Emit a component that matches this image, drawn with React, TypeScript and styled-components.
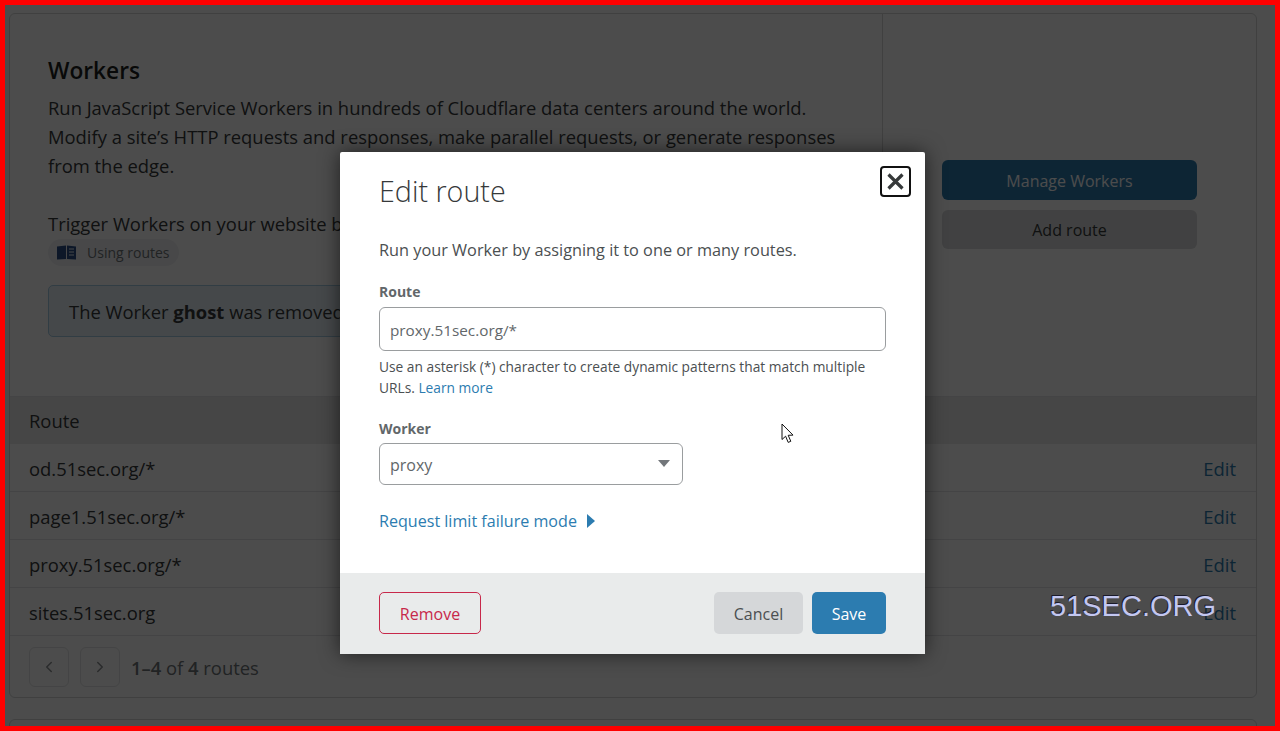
import styled, { createGlobalStyle } from 'styled-components';
import { ChevronLeft, ChevronRight } from 'lucide-react';

const GlobalStyle = createGlobalStyle`
  html, body {
    margin: 0;
    padding: 0;
    background: #ffffff;
  }
  * {
    box-sizing: border-box;
  }
  body {
    font-family: "Open Sans", "Noto Sans", "Liberation Sans", sans-serif;
    color: #36393a;
  }
`;

const Frame = styled.div`
  position: relative;
  width: 1280px;
  height: 731px;
  border: 5px solid #ff0000;
  overflow: hidden;
`;

const Page = styled.div`
  padding: 8px 18px 0 4px;
`;

const Card = styled.section`
  border: 1px solid #d5d7d8;
  border-radius: 6px;
  background: #ffffff;
  & + & {
    margin-top: 21px;
    height: 60px;
  }
`;

const Top = styled.div`
  display: flex;
  height: 382px;
`;

const Intro = styled.div`
  width: 873px;
  padding: 41px 38px 0;
  border-right: 1px solid #d5d7d8;
`;

const Title = styled.h2`
  margin: 0 0 6px;
  font-size: 22.7px;
  line-height: 32px;
  font-weight: 600;
  color: #1d1f20;
`;

const Body = styled.p`
  margin: 0;
  font-size: 18.4px;
  line-height: 29px;
  white-space: nowrap;
`;

const Gap = styled.div`
  height: 29px;
`;

const Pill = styled.span`
  display: inline-flex;
  align-items: center;
  gap: 10px;
  height: 27px;
  margin-top: 1px;
  padding: 0 9px;
  border-radius: 14px;
  background: #f0f2f5;
  font-size: 14px;
  color: #6f7578;
`;

const Notice = styled.div`
  margin-top: 19px;
  height: 52px;
  width: 800px;
  padding: 0 20px;
  display: flex;
  align-items: center;
  border: 1px solid #a5cbe4;
  border-radius: 5px;
  background: #e6f1f8;
  font-size: 18.4px;
  white-space: pre;
  b {
    font-weight: 700;
  }
`;

const Actions = styled.div`
  flex: 1;
  padding: 146px 59px 0;
  display: flex;
  flex-direction: column;
  gap: 10px;
`;

const ActionButton = styled.div<{ $primary?: boolean }>`
  height: ${(p) => (p.$primary ? 40 : 39)}px;
  padding-top: ${(p) => (p.$primary ? 2 : 0)}px;
  display: flex;
  align-items: center;
  justify-content: center;
  border-radius: 6px;
  font-size: 16px;
  background: ${(p) => (p.$primary ? '#2c7cb0' : '#d9dbdc')};
  color: ${(p) => (p.$primary ? '#ffffff' : '#36393a')};
`;

const TableHead = styled.div`
  height: 48px;
  padding: 0 19px;
  display: flex;
  align-items: center;
  background: #ebecec;
  border-top: 1px solid #e3e5e6;
  font-size: 18.4px;
  font-weight: 500;
`;

const Row = styled.div`
  height: 48px;
  padding: 2px 20px 0 19px;
  display: flex;
  align-items: center;
  justify-content: space-between;
  border-bottom: 1px solid #e3e5e6;
  font-size: 18.4px;
`;

const EditLink = styled.span`
  color: #2c7cb0;
`;

const Pager = styled.div`
  height: 61px;
  padding: 0 19px;
  display: flex;
  align-items: center;
  gap: 11px;
  font-size: 18.4px;
  color: #6f7578;
  b {
    font-weight: 600;
  }
`;

const PagerText = styled.span`
  padding-top: 2px;
`;

const PageButton = styled.div`
  width: 40px;
  height: 40px;
  display: flex;
  align-items: center;
  justify-content: center;
  border: 1px solid #e3e5e6;
  border-radius: 6px;
  color: #8d9194;
`;

const Overlay = styled.div`
  position: absolute;
  inset: 0;
  background: rgba(0, 0, 0, 0.7);
  padding: 147px 0 0 335px;
`;

const Modal = styled.div`
  position: relative;
  width: 585px;
  height: 502px;
  display: flex;
  flex-direction: column;
  justify-content: space-between;
  background: #ffffff;
  border-radius: 2px;
  box-shadow: 0 0 20px rgba(0, 0, 0, 0.6);
`;

const ModalBody = styled.div`
  padding: 20px 39px 0;
`;

const ModalTitle = styled.h2`
  margin: 0 0 28px;
  font-size: 28.7px;
  line-height: 38px;
  font-weight: 300;
  color: #36393a;
`;

const CloseButton = styled.div`
  position: absolute;
  top: 14px;
  right: 14px;
  width: 31px;
  height: 31px;
  display: flex;
  align-items: center;
  justify-content: center;
  border: 2px solid #111111;
  border-radius: 4px;
  color: #36393a;
`;

const Lead = styled.p`
  margin: 0 0 20px;
  font-size: 16.3px;
  line-height: 24px;
  color: #4b4f51;
`;

const Label = styled.div<{ $gap: number }>`
  font-size: 14px;
  line-height: 20px;
  font-weight: 700;
  color: #62676a;
  margin-bottom: ${(p) => p.$gap}px;
`;

const Field = styled.div<{ $width: number; $height: number; $size: number }>`
  width: ${(p) => p.$width}px;
  height: ${(p) => p.$height}px;
  display: flex;
  align-items: center;
  justify-content: space-between;
  padding: 2px 12px 0 10px;
  border: 1px solid #9a9d9f;
  border-radius: 6px;
  font-size: ${(p) => p.$size}px;
  color: #62676a;
`;

const Help = styled.p`
  margin: 5px 0 21px;
  font-size: 13.75px;
  line-height: 21px;
  color: #4b4f51;
  a {
    color: #2c7cb0;
  }
`;

const Caret = styled.span`
  width: 0;
  height: 0;
  margin-top: -3px;
  border-left: 6px solid transparent;
  border-right: 6px solid transparent;
  border-top: 7px solid #72767a;
`;

const Disclosure = styled.div`
  margin-top: 24px;
  display: flex;
  align-items: center;
  gap: 10px;
  font-size: 16.1px;
  line-height: 24px;
  color: #2c7cb0;
`;

const DisclosureArrow = styled.span`
  width: 0;
  height: 0;
  border-top: 7px solid transparent;
  border-bottom: 7px solid transparent;
  border-left: 8px solid #2c7cb0;
`;

const ModalFooter = styled.div`
  height: 81px;
  padding: 0 39px 2px;
  display: flex;
  align-items: center;
  justify-content: space-between;
  background: #e9ebeb;
`;

const FooterGroup = styled.div`
  display: flex;
  gap: 9px;
`;

const FooterButton = styled.div<{ $kind: 'danger' | 'muted' | 'primary'; $width: number }>`
  width: ${(p) => p.$width}px;
  height: 42px;
  padding-top: 2px;
  display: flex;
  align-items: center;
  justify-content: center;
  border-radius: 5px;
  font-size: 16px;
  border: 1px solid ${(p) => (p.$kind === 'danger' ? '#c7284a' : 'transparent')};
  background: ${(p) => (p.$kind === 'primary' ? '#2c7cb0' : p.$kind === 'muted' ? '#d5d7d9' : 'transparent')};
  color: ${(p) => (p.$kind === 'primary' ? '#ffffff' : p.$kind === 'muted' ? '#4b4f51' : '#c7284a')};
`;

const Pointer = styled.svg`
  position: absolute;
  left: 776px;
  top: 418px;
`;

const Watermark = styled.div`
  position: absolute;
  left: 1045px;
  top: 584px;
  font-family: "Liberation Sans", Arial, sans-serif;
  font-size: 29px;
  line-height: 34px;
  color: #c3c7f0;
  text-shadow: -1px -1px 0 #1a1a2a;
`;

const routes = ['od.51sec.org/*', 'page1.51sec.org/*', 'proxy.51sec.org/*', 'sites.51sec.org'];

export default function App() {
  return (
    <>
      <GlobalStyle />
      <Frame>
        <Page>
          <Card>
            <Top>
              <Intro>
                <Title>Workers</Title>
                <Body>
                  Run JavaScript Service Workers in hundreds of Cloudflare data centers around the world.
                  <br />
                  Modify a site’s HTTP requests and responses, make parallel requests, or generate responses
                  <br />
                  from the edge.
                </Body>
                <Gap />
                <Body>Trigger Workers on your website by adding a route.</Body>
                <Pill>
                  <svg width="20" height="15" viewBox="0 0 20 15">
                    <path d="M0 1.5 L9 0.5 V14 L0 14.5 Z" fill="#2c4f86" />
                    <path d="M10 0.5 L19 1.5 V14.5 L10 14 Z" fill="#2c4f86" />
                    <path d="M12 4 H17 M12 7 H17 M12 10 H17" stroke="#f0f2f5" strokeWidth="1" />
                  </svg>
                  Using routes
                </Pill>
                <Notice>
                  The Worker <b>ghost</b> was removed from this route.
                </Notice>
              </Intro>
              <Actions>
                <ActionButton $primary>Manage Workers</ActionButton>
                <ActionButton>Add route</ActionButton>
              </Actions>
            </Top>
            <TableHead>Route</TableHead>
            {routes.map((route) => (
              <Row key={route}>
                <span>{route}</span>
                <EditLink>Edit</EditLink>
              </Row>
            ))}
            <Pager>
              <PageButton>
                <ChevronLeft size={18} />
              </PageButton>
              <PageButton>
                <ChevronRight size={18} />
              </PageButton>
              <PagerText>
                <b>1–4</b> of <b>4</b> routes
              </PagerText>
            </Pager>
          </Card>
          <Card />
        </Page>
        <Overlay>
          <Modal>
            <ModalBody>
              <ModalTitle>Edit route</ModalTitle>
              <Lead>Run your Worker by assigning it to one or many routes.</Lead>
              <Label $gap={5}>Route</Label>
              <Field $width={507} $height={44} $size={15.3}>
                proxy.51sec.org/*
              </Field>
              <Help>
                Use an asterisk (*) character to create dynamic patterns that match multiple
                <br />
                URLs. <a>Learn more</a>
              </Help>
              <Label $gap={4}>Worker</Label>
              <Field $width={304} $height={42} $size={16}>
                proxy
                <Caret />
              </Field>
              <Disclosure>
                Request limit failure mode
                <DisclosureArrow />
              </Disclosure>
            </ModalBody>
            <ModalFooter>
              <FooterButton $kind="danger" $width={102}>
                Remove
              </FooterButton>
              <FooterGroup>
                <FooterButton $kind="muted" $width={89}>
                  Cancel
                </FooterButton>
                <FooterButton $kind="primary" $width={74}>
                  Save
                </FooterButton>
              </FooterGroup>
            </ModalFooter>
            <CloseButton>
              <svg width="17" height="17" viewBox="0 0 17 17">
                <path d="M1.5 1.5 L15.5 15.5 M15.5 1.5 L1.5 15.5" stroke="#36393a" strokeWidth="3.2" />
              </svg>
            </CloseButton>
          </Modal>
        </Overlay>
        <Pointer width="14" height="21" viewBox="0 0 14 21">
          <path
            d="M1 1 V16.5 L4.6 13.2 L7.2 19.4 L9.8 18.3 L7.2 12.3 L12 12.1 Z"
            fill="#ffffff"
            stroke="#111111"
            strokeWidth="1"
          />
        </Pointer>
        <Watermark>51SEC.ORG</Watermark>
      </Frame>
    </>
  );
}
